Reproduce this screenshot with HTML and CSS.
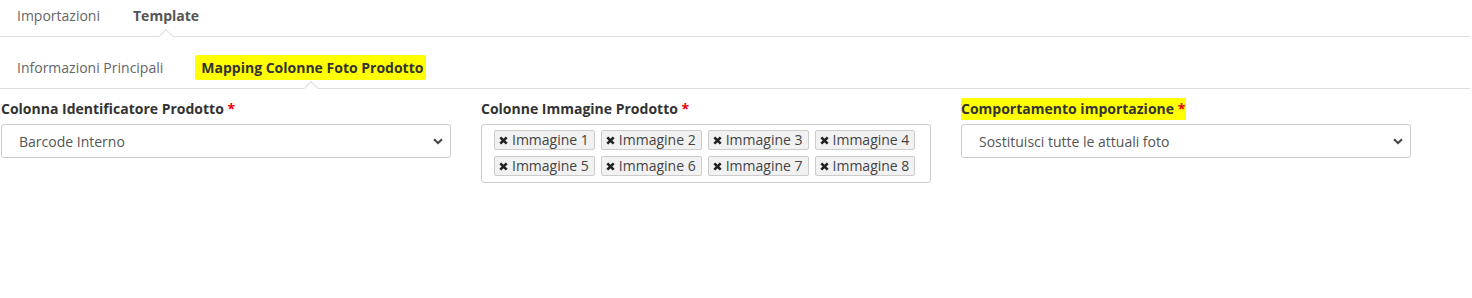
FILE: index.html
```html
<!DOCTYPE html>
<html>
<head>
    <title>Template Importazione</title>
    <link rel="stylesheet" href="styles.css">
</head>
<body>
    <ul class="tabs">
        <li><a href="#">Importazioni</a></li>
        <li class="active"><a href="#">Template</a></li>
    </ul>

    <ul class="tabs sub-tabs">
        <li><a href="#">Informazioni Principali</a></li>
        <li class="active"><a href="#"><span class="marker">Mapping Colonne Foto Prodotto</span></a></li>
    </ul>

    <div class="form-row">
        <div class="form-group">
            <label>Colonna Identificatore Prodotto <span class="req">*</span></label>
            <div class="select">
                <span>Barcode Interno</span>
                <svg width="10" height="7" viewBox="0 0 10 7"><path d="M1 1.2 L5 5 L9 1.2" fill="none" stroke="#444" stroke-width="2"/></svg>
            </div>
        </div>

        <div class="form-group">
            <label>Colonne Immagine Prodotto <span class="req">*</span></label>
            <div class="multi-select">
                <span class="tag"><svg viewBox="0 0 9 9"><path d="M1.3 1.3 L7.7 7.7 M7.7 1.3 L1.3 7.7" stroke="#222" stroke-width="2.6"/></svg>Immagine 1</span>
                <span class="tag"><svg viewBox="0 0 9 9"><path d="M1.3 1.3 L7.7 7.7 M7.7 1.3 L1.3 7.7" stroke="#222" stroke-width="2.6"/></svg>Immagine 2</span>
                <span class="tag"><svg viewBox="0 0 9 9"><path d="M1.3 1.3 L7.7 7.7 M7.7 1.3 L1.3 7.7" stroke="#222" stroke-width="2.6"/></svg>Immagine 3</span>
                <span class="tag"><svg viewBox="0 0 9 9"><path d="M1.3 1.3 L7.7 7.7 M7.7 1.3 L1.3 7.7" stroke="#222" stroke-width="2.6"/></svg>Immagine 4</span>
                <span class="tag"><svg viewBox="0 0 9 9"><path d="M1.3 1.3 L7.7 7.7 M7.7 1.3 L1.3 7.7" stroke="#222" stroke-width="2.6"/></svg>Immagine 5</span>
                <span class="tag"><svg viewBox="0 0 9 9"><path d="M1.3 1.3 L7.7 7.7 M7.7 1.3 L1.3 7.7" stroke="#222" stroke-width="2.6"/></svg>Immagine 6</span>
                <span class="tag"><svg viewBox="0 0 9 9"><path d="M1.3 1.3 L7.7 7.7 M7.7 1.3 L1.3 7.7" stroke="#222" stroke-width="2.6"/></svg>Immagine 7</span>
                <span class="tag"><svg viewBox="0 0 9 9"><path d="M1.3 1.3 L7.7 7.7 M7.7 1.3 L1.3 7.7" stroke="#222" stroke-width="2.6"/></svg>Immagine 8</span>
            </div>
        </div>

        <div class="form-group">
            <label><span class="label-mark">Comportamento importazione <span class="req">*</span></span></label>
            <div class="select">
                <span>Sostituisci tutte le attuali foto</span>
                <svg width="10" height="7" viewBox="0 0 10 7"><path d="M1 1.2 L5 5 L9 1.2" fill="none" stroke="#444" stroke-width="2"/></svg>
            </div>
        </div>
    </div>
</body>
</html>
```

FILE: styles.css
```css
body {
    font-family: "Open Sans", Arial, sans-serif;
    font-size: 14px;
    color: #333;
    margin: 0;
    padding: 0;
    background: #fff;
}

.tabs {
    list-style-type: none;
    margin: 0;
    padding: 0 0 0 17px;
    display: flex;
    border-bottom: 1px solid #ddd;
    margin-right: 2px;
}

.tabs li {
    position: relative;
    margin-right: 33px;
}

.tabs li a {
    display: block;
    color: #666;
    text-decoration: none;
    line-height: 20px;
    padding: 6px 0 10px 0;
}

.tabs li.active a {
    font-weight: bold;
    color: #555;
}

.tabs li.active::after {
    content: "";
    position: absolute;
    left: 50%;
    bottom: -5px;
    width: 9px;
    height: 9px;
    margin-left: -5px;
    background: #fff;
    border-left: 1px solid #ddd;
    border-top: 1px solid #ddd;
    transform: rotate(45deg);
}

.sub-tabs li a {
    padding: 21px 0 10px 0;
}

.sub-tabs li.active {
    margin-left: -1px;
}

.marker {
    background: #ffff00;
    color: #333;
    padding: 3px 3px 3px 6px;
    border-radius: 2px;
}

.form-row {
    display: grid;
    grid-template-columns: 450px 450px 450px;
    column-gap: 30px;
    padding: 10px 0 0 1px;
}

.form-group label {
    display: block;
    font-weight: bold;
    color: #333;
    line-height: 20px;
    margin-bottom: 5px;
}

.label-mark {
    background: #ffff00;
    padding: 1px 1px 2px 0;
}

.req {
    color: #e00;
}

.select {
    display: flex;
    justify-content: space-between;
    align-items: center;
    height: 32px;
    border: 1px solid #ccc;
    border-radius: 3px;
    padding: 0 7px 0 17px;
    color: #555;
}

.multi-select {
    display: flex;
    flex-wrap: wrap;
    gap: 6px;
    border: 1px solid #ccc;
    border-radius: 3px;
    padding: 5px 6px 6px 12px;
}

.tag {
    display: inline-flex;
    align-items: center;
    height: 18px;
    line-height: 18px;
    padding: 0 5px 0 4px;
    background: #f1f1f1;
    border: 1px solid #ccc;
    border-radius: 2px;
    color: #444;
}

.tag svg {
    width: 9px;
    height: 9px;
    margin-right: 4px;
}
```
